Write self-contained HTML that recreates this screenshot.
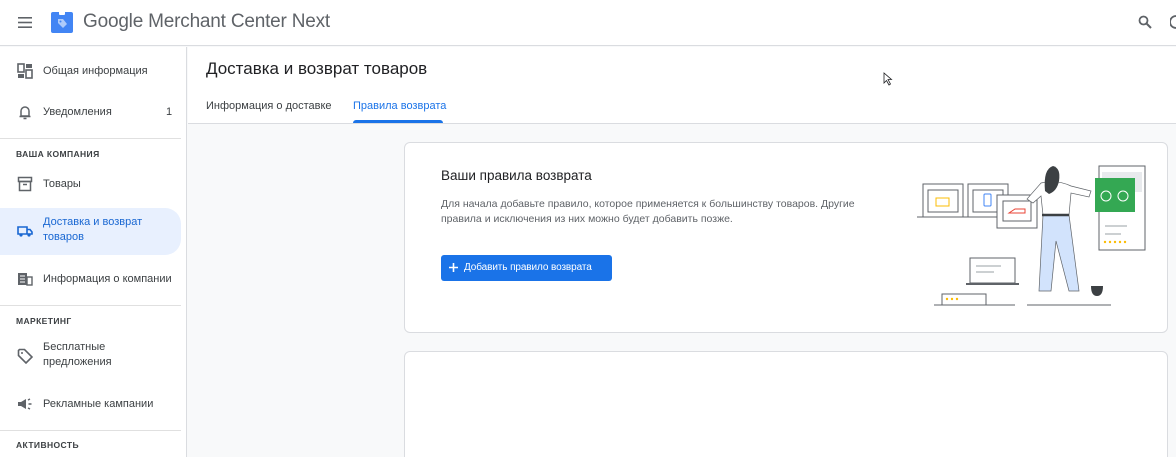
<!DOCTYPE html>
<html><head><meta charset="utf-8"><style>
*{box-sizing:border-box;margin:0;padding:0}
html,body{width:1176px;height:457px;overflow:hidden}
body{background:#f8f9fa;font-family:"Liberation Sans",Arial,sans-serif;color:#3c4043;position:relative}
.top{position:absolute;left:0;top:0;width:1176px;height:46px;background:#fff;border-bottom:1px solid #dadce0}
.side{position:absolute;left:0;top:47px;width:187px;height:410px;background:#fff;border-right:1px solid #dadce0}
.item{position:absolute;left:0;width:181px;font-size:11px;color:#3c4043;display:flex;align-items:center}
.item .ic{position:absolute;left:17px;width:16px;height:16px}
.item .tx{position:absolute;left:43px;line-height:15px;white-space:nowrap}
.sec{position:absolute;left:16px;font-size:8.5px;font-weight:bold;letter-spacing:.4px;color:#3c4043}
.hr{position:absolute;left:0;width:181px;height:1px;background:#e0e0e0}
.ph{position:absolute;left:188px;top:47px;width:988px;height:77px;background:#fff;border-bottom:1px solid #dadce0}
.card{position:absolute;left:404px;width:764px;background:#fff;border:1px solid #dadce0;border-radius:6px}
</style></head><body>
<div class="top">
 <svg style="position:absolute;left:18px;top:17px" width="14" height="11"><rect y="0" width="14" height="1.6" fill="#5f6368"/><rect y="4.7" width="14" height="1.6" fill="#5f6368"/><rect y="9.4" width="14" height="1.6" fill="#5f6368"/></svg>
 <svg style="position:absolute;left:51px;top:11px" width="22" height="22"><rect x="0" y="1" width="22" height="21" rx="2" fill="#4285f4"/><rect x="8" y="0" width="6" height="4" rx="1" fill="#fff"/><path d="M7 8 L12 8 L16 13 L12 17 L7 12 Z" fill="#aecbfa"/><circle cx="9.5" cy="10.5" r="1" fill="#4285f4"/></svg>
 <div style="position:absolute;left:83px;top:11px;font-size:19px;color:#5f6368;letter-spacing:-.2px">Google Merchant Center Next</div>
 <svg style="position:absolute;left:1138px;top:15px" width="14" height="14"><circle cx="5.5" cy="5.5" r="4" stroke="#5f6368" stroke-width="1.8" fill="none"/><path d="M8.5 8.5 L13 13" stroke="#5f6368" stroke-width="2"/></svg>
 <svg style="position:absolute;left:1170px;top:15px" width="6" height="14"><path d="M6 1 A6 6 0 0 0 6 13" stroke="#5f6368" stroke-width="1.8" fill="none"/></svg>
</div>
<div class="side">
 <div class="item" style="top:16px;height:16px"><svg class="ic" viewBox="0 0 16 16"><rect x="1" y="1" width="6" height="8" fill="none" stroke="#5f6368" stroke-width="1.6"/><rect x="9" y="1" width="6" height="4" fill="#5f6368"/><rect x="1" y="11" width="6" height="4" fill="#5f6368"/><rect x="9" y="7" width="6" height="8" fill="none" stroke="#5f6368" stroke-width="1.6"/></svg><span class="tx">Общая информация</span></div>
 <div class="item" style="top:57px;height:16px"><svg class="ic" viewBox="0 0 16 16"><path d="M4 12 V7 A4 4 0 0 1 12 7 V12 Z M2.5 12.5 H13.5 M6.5 14.5 H9.5" stroke="#5f6368" stroke-width="1.5" fill="none"/></svg><span class="tx">Уведомления</span><span style="position:absolute;left:166px">1</span></div>
 <div class="hr" style="top:91px"></div>
 <div class="sec" style="top:102px">ВАША КОМПАНИЯ</div>
 <div class="item" style="top:129px;height:16px"><svg class="ic" viewBox="0 0 16 16"><rect x="1.5" y="1.5" width="13" height="4" fill="none" stroke="#5f6368" stroke-width="1.5"/><rect x="2.5" y="5.5" width="11" height="9" fill="none" stroke="#5f6368" stroke-width="1.5"/><path d="M6 8.5 H10" stroke="#5f6368" stroke-width="1.5"/></svg><span class="tx">Товары</span></div>
 <div style="position:absolute;left:0;top:161px;width:181px;height:47px;background:#e8f0fe;border-radius:0 16px 16px 0"></div>
 <div class="item" style="top:176px;height:16px;color:#1967d2"><svg class="ic" viewBox="0 0 16 16"><path d="M1 4 H10 V11 H1 Z M10 6.5 H13 L15 9 V11 H10" fill="none" stroke="#1967d2" stroke-width="1.6"/><circle cx="4" cy="12" r="1.6" fill="#1967d2"/><circle cx="12" cy="12" r="1.6" fill="#1967d2"/></svg><span class="tx" style="top:-8px">Доставка и возврат<br>товаров</span></div>
 <div class="item" style="top:224px;height:16px"><svg class="ic" viewBox="0 0 16 16"><rect x="1" y="2" width="9" height="12" fill="#5f6368"/><rect x="10" y="6" width="5" height="8" fill="none" stroke="#5f6368" stroke-width="1.4"/><path d="M3 5 H8 M3 8 H8 M3 11 H8" stroke="#fff" stroke-width="1"/></svg><span class="tx">Информация о компании</span></div>
 <div class="hr" style="top:258px"></div>
 <div class="sec" style="top:269px">МАРКЕТИНГ</div>
 <div class="item" style="top:301px;height:16px"><svg class="ic" viewBox="0 0 16 16"><path d="M1.5 2.5 V7.5 L9 15 L15 9 L7.5 1.5 H2.5 Z" fill="none" stroke="#5f6368" stroke-width="1.6"/><circle cx="5" cy="5" r="1" fill="#5f6368"/></svg><span class="tx" style="top:-8px">Бесплатные<br>предложения</span></div>
 <div class="item" style="top:349px;height:16px"><svg class="ic" viewBox="0 0 16 16"><path d="M1 6 H4 L9 3 V13 L4 10 H1 Z" fill="#5f6368"/><path d="M11 4 L13 3 M11.5 8 H14.5 M11 12 L13 13" stroke="#5f6368" stroke-width="1.4"/></svg><span class="tx">Рекламные кампании</span></div>
 <div class="hr" style="top:383px"></div>
 <div class="sec" style="top:393px">АКТИВНОСТЬ</div>
</div>
<div class="ph">
 <div style="position:absolute;left:18px;top:12px;font-size:17px;color:#202124">Доставка и возврат товаров</div>
 <div style="position:absolute;left:18px;top:53px;font-size:11px;color:#3c4043">Информация о доставке</div>
 <div style="position:absolute;left:165px;top:53px;font-size:11px;color:#1a73e8">Правила возврата</div>
 <div style="position:absolute;left:165px;top:73px;width:90px;height:3px;background:#1a73e8;border-radius:3px 3px 0 0"></div>
</div>
<div class="card" style="top:142px;height:191px">
 <div style="position:absolute;left:36px;top:25px;font-size:13.5px;color:#202124">Ваши правила возврата</div>
 <div style="position:absolute;left:36px;top:54px;font-size:10.5px;color:#5f6368;line-height:15px;width:440px">Для начала добавьте правило, которое применяется к большинству товаров. Другие правила и исключения из них можно будет добавить позже.</div>
 <div style="position:absolute;left:36px;top:112px;width:171px;height:26px;background:#1a73e8;border-radius:3px;color:#fff;font-size:10px;line-height:26px;padding-left:23px;white-space:nowrap;letter-spacing:-.1px">Добавить правило возврата</div>
 <svg style="position:absolute;left:43px;top:119px" width="11" height="11"><path d="M5.5 1 V10 M1 5.5 H10" stroke="#fff" stroke-width="1.6"/></svg>
 <svg style="position:absolute;left:486px;top:8px" width="286" height="170" viewBox="0 0 286 170">
  <g fill="none" stroke="#5f6368" stroke-width="1">
   <path d="M26 66 H115"/><rect x="32" y="33" width="40" height="33" fill="#fff"/><rect x="37" y="39" width="30" height="22"/>
   <rect x="77" y="33" width="40" height="33" fill="#fff"/><rect x="82" y="39" width="30" height="22"/>
   <rect x="106" y="44" width="40" height="33" fill="#fff"/><rect x="112" y="50" width="28" height="20"/>
   <rect x="208" y="15" width="46" height="84" fill="#fff"/>
   <rect x="79" y="107" width="45" height="25" fill="#fff"/><path d="M75 133 H128" stroke-width="2"/>
   <rect x="51" y="143" width="44" height="11"/><path d="M43 154 H124 M136 154 H220"/>
  </g>
  <rect x="211" y="21" width="40" height="20" fill="#e8eaed"/>
  <rect x="204" y="27" width="40" height="34" fill="#34a853"/>
  <circle cx="215" cy="45" r="5" fill="none" stroke="#fff"/><circle cx="232" cy="45" r="5" fill="none" stroke="#fff"/>
  <rect x="45" y="47" width="13" height="8" fill="none" stroke="#fbbc04"/>
  <rect x="93" y="43" width="7" height="12" rx="1" fill="none" stroke="#4285f4"/>
  <path d="M118 62 H134 V58 H124 Z" fill="none" stroke="#ea4335"/>
  <path d="M152 64 L148 140 L160 140 L165 90 L178 140 L188 140 L178 64 Z" fill="#d2e3fc" stroke="#5f6368" stroke-width=".7"/>
  <path d="M150 32 Q165 28 180 35 L200 40 L198 46 L180 42 L178 64 L152 64 L150 45 L142 52 L136 48 Z" fill="#fff" stroke="#5f6368" stroke-width=".7"/>
  <path d="M154 40 Q152 18 162 15 Q170 17 168 30 Q166 40 158 43 Z" fill="#3c4043"/>
  <path d="M151 64 H178" stroke="#3c4043" stroke-width="2.5"/>
  <path d="M200 135 H212 Q212 145 206 145 Q200 145 200 135" fill="#3c4043"/>
  <g fill="#fbbc04"><circle cx="56" cy="148" r="1.2"/><circle cx="61" cy="148" r="1.2"/><circle cx="66" cy="148" r="1.2"/><circle cx="214" cy="91" r="1.2"/><circle cx="219" cy="91" r="1.2"/><circle cx="224" cy="91" r="1.2"/><circle cx="229" cy="91" r="1.2"/><circle cx="234" cy="91" r="1.2"/></g>
  <path d="M85 115 H110 M85 121 H103" stroke="#9aa0a6"/><path d="M214 75 H236 M214 83 H230" stroke="#9aa0a6"/>
 </svg>
</div>
<div class="card" style="top:351px;height:112px"></div>
<svg style="position:absolute;left:883px;top:72px" width="10" height="14"><path d="M1 1 L1 11 L3.5 8.5 L6 13 L7.5 12 L5 7.5 L8.5 7.5 Z" fill="#fff" stroke="#202124" stroke-width=".8"/></svg>
</body></html>
